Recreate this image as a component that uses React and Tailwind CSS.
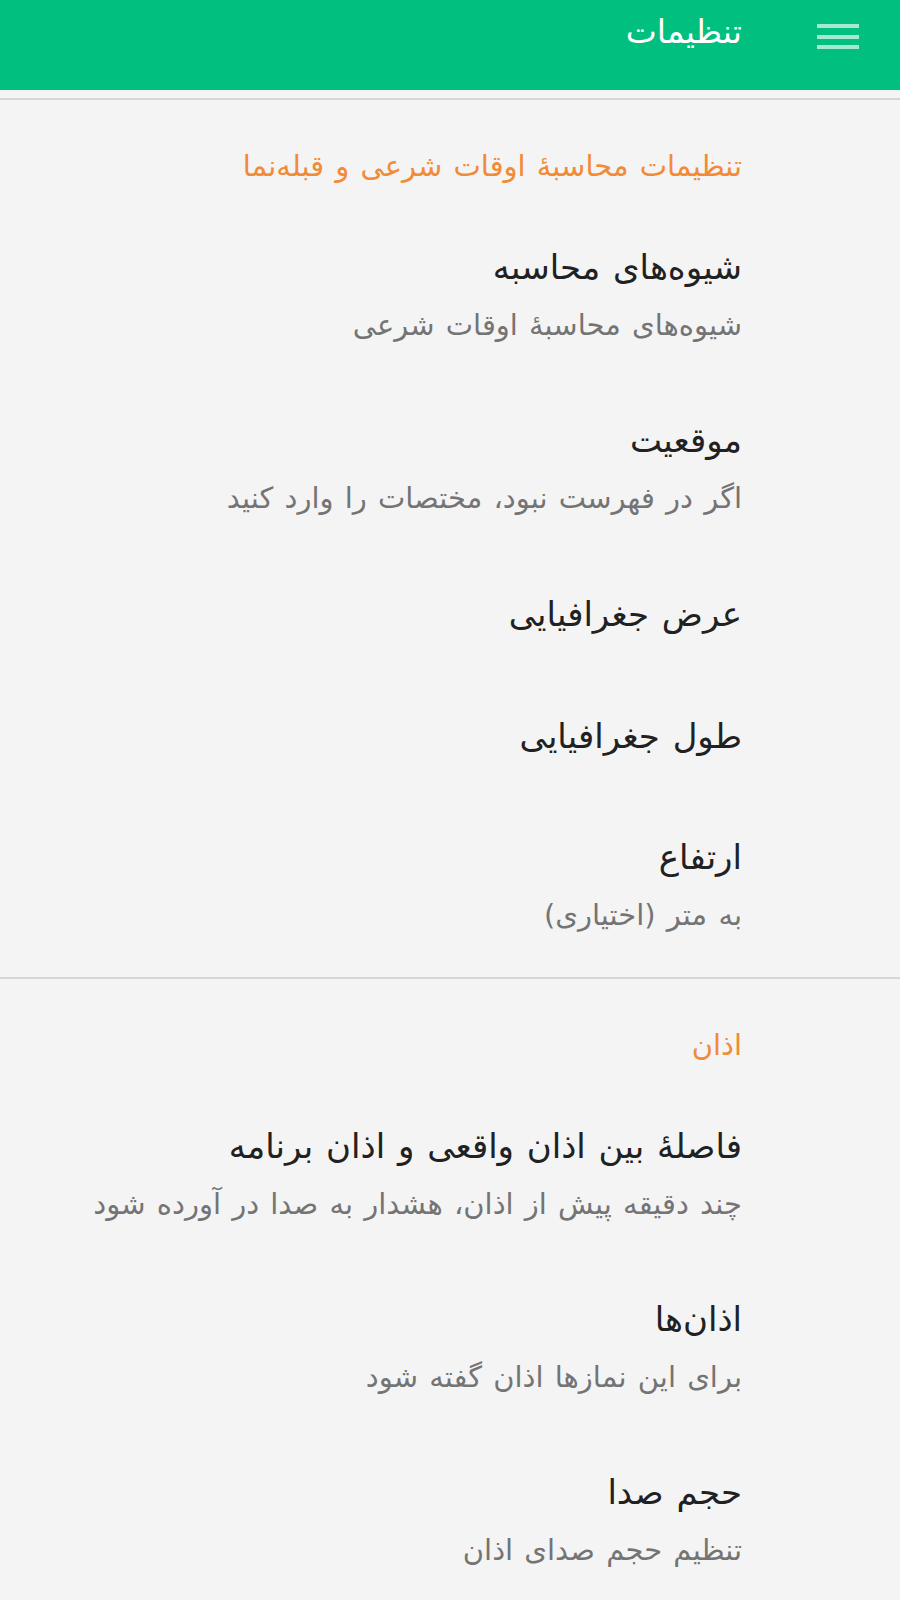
const sections = [
  {
    id: 'times',
    title: 'تنظیمات محاسبهٔ اوقات شرعی و قبله‌نما',
    items: [
      { id: 'method', title: 'شیوه‌های محاسبه', summary: 'شیوه‌های محاسبهٔ اوقات شرعی' },
      { id: 'location', title: 'موقعیت', summary: 'اگر در فهرست نبود، مختصات را وارد کنید' },
      { id: 'lat', title: 'عرض جغرافیایی' },
      { id: 'lng', title: 'طول جغرافیایی' },
      { id: 'alt', title: 'ارتفاع', summary: 'به متر (اختیاری)' },
    ],
  },
  {
    id: 'athan',
    title: 'اذان',
    items: [
      { id: 'gap', title: 'فاصلهٔ بین اذان واقعی و اذان برنامه', summary: 'چند دقیقه پیش از اذان، هشدار به صدا در آورده شود' },
      { id: 'prayers', title: 'اذان‌ها', summary: 'برای این نمازها اذان گفته شود' },
      { id: 'volume', title: 'حجم صدا', summary: 'تنظیم حجم صدای اذان' },
    ],
  },
];

function SettingItem({ item }) {
  return (
    <div className={item.summary ? 'py-[38px]' : 'py-[39px]'}>
      <div className="text-[34px] leading-[44px] text-[#212121] [word-spacing:2px]">{item.title}</div>
      {item.summary && (
        <div className="mt-[19px] text-[29px] leading-[34px] text-[#747474] [word-spacing:2px]">{item.summary}</div>
      )}
    </div>
  );
}

function App() {
  return (
    <div
      dir="rtl"
      className="min-h-[1600px] w-[900px] overflow-hidden bg-[#f4f4f4]"
      style={{ fontFamily: '"DejaVu Sans", sans-serif' }}
    >
      <header className="flex h-[90px] items-start bg-[#00bf7f] pr-[41px]">
        <div className="mt-[24px] flex w-[42px] flex-col gap-[6.5px]">
          <span className="h-[4px] bg-white/65" />
          <span className="h-[4px] bg-white/65" />
          <span className="h-[4px] bg-white/65" />
        </div>
        <h1 className="mr-[75px] mt-[12px] text-[33px] leading-[40px] text-white">تنظیمات</h1>
      </header>
      <div className="mt-[8px] h-[2px] bg-[#d6d6d6]" />
      {sections.map((section, i) => (
        <section key={section.id}>
          {i > 0 && <div className="mt-[7px] h-[2px] bg-[#d6d6d6]" />}
          <div className="pr-[158px] pt-[48px]">
            <h2 className="mb-[23px] text-[29px] leading-[36px] text-[#f28a36] [word-spacing:2px]">{section.title}</h2>
            {section.items.map((item) => (
              <SettingItem key={item.id} item={item} />
            ))}
          </div>
        </section>
      ))}
    </div>
  );
}

export default App;
